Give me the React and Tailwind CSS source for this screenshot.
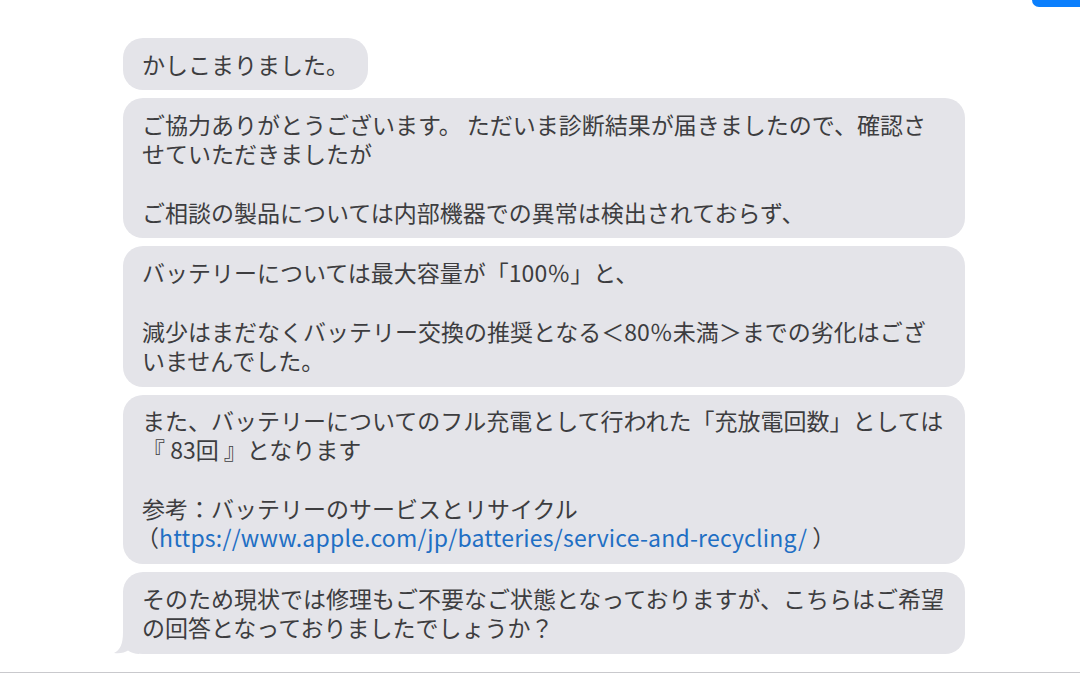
import React from 'react';

const messages = [
    {id: 1, fit: true, lines: ['かしこまりました。']},
    {
        id: 2,
        lines: [
            'ご協力ありがとうございます。 ただいま診断結果が届きましたので、確認さ',
            'せていただきましたが',
            '',
            'ご相談の製品については内部機器での異常は検出されておらず、',
        ],
    },
    {
        id: 3,
        lines: [
            'バッテリーについては最大容量が「100％」と、',
            '',
            '減少はまだなくバッテリー交換の推奨となる＜80％未満＞までの劣化はござ',
            'いませんでした。',
        ],
    },
    {
        id: 4,
        lines: [
            'また、バッテリーについてのフル充電として行われた「充放電回数」としては',
            '『 83回 』となります',
            '',
            '参考：バッテリーのサービスとリサイクル',
            'link',
        ],
    },
    {
        id: 5,
        tail: true,
        lines: [
            'そのため現状では修理もご不要なご状態となっておりますが、こちらはご希望',
            'の回答となっておりましたでしょうか？',
        ],
    },
];

function Line({text}) {
    if (text === '') return <div className="h-[29.3px]"/>;
    if (text === 'link') {
        return (
            <div className="h-[29.3px] whitespace-nowrap">
                <span className="-ml-[6px]">（</span>
                <span className="text-[#1f6fc4] tracking-[0.2px]">https://www.apple.com/jp/batteries/service-and-recycling/</span>
                <span> ）</span>
            </div>
        );
    }
    return <div className="h-[29.3px] whitespace-nowrap">{text}</div>;
}

function Bubble({msg}) {
    return (
        <div
            className={`relative rounded-[20px] bg-[#e4e4e9] px-[19px] py-[11.5px] ${msg.fit ? 'w-fit' : 'w-[842px]'}`}>
            {msg.lines.map((line, i) => <Line key={i} text={line}/>)}
            {msg.tail && (
                <svg className="absolute -left-[10px] bottom-0" width="26" height="22" viewBox="0 0 26 22">
                    <path d="M10 0 C10 12 7 18 1 21 C7 22 12 20.5 15 18.5 C18 20.5 22 22 26 22 L26 0 Z"
                          fill="#e4e4e9"/>
                </svg>
            )}
        </div>
    );
}

export default function App() {
    return (
        <div
            className="relative h-[675px] w-[1080px] overflow-hidden bg-white flex flex-col text-[23px] leading-[29.3px] text-[#3d3d40]"
            style={{fontFamily: '"Noto Sans CJK JP", "Noto Sans", sans-serif'}}>
            <div className="absolute top-0 right-0 h-[7px] w-[48px] rounded-bl-[14px] bg-[#0b7ffd]"/>
            <div className="flex flex-col gap-[8px] pl-[123px] pt-[38px]">
                {messages.map(m => <Bubble key={m.id} msg={m}/>)}
            </div>
            <div className="mt-auto mb-[2px] h-px w-full bg-[#c9c9cd]"/>
        </div>
    );
}
